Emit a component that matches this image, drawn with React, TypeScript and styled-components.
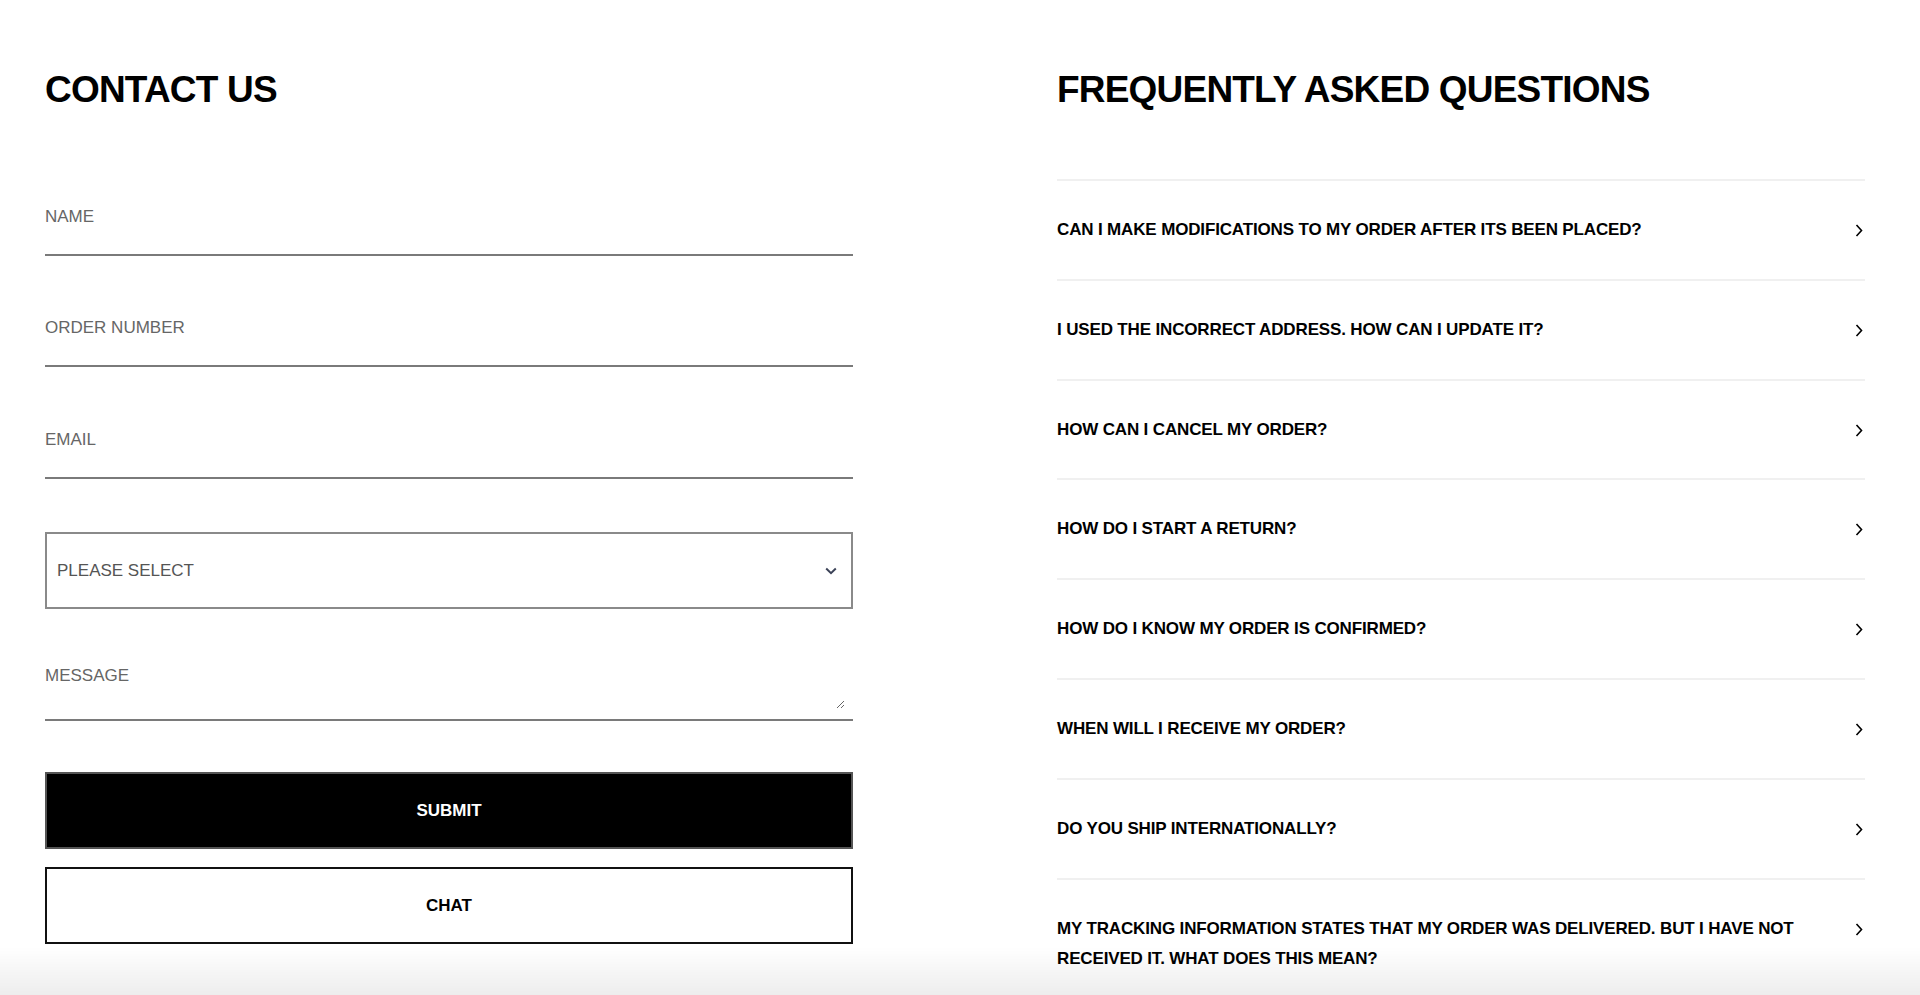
import React from 'react'
import styled, { createGlobalStyle } from 'styled-components'

const GlobalStyle = createGlobalStyle`
  html, body {
    margin: 0;
    padding: 0;
    background: #fff;
  }
  body {
    font-family: 'Liberation Sans', Arial, Helvetica, sans-serif;
    color: #000;
  }
  * {
    box-sizing: border-box;
  }
`

const Page = styled.main`
  display: grid;
  grid-template-columns: 808px 808px;
  column-gap: 204px;
  padding: 68px 0 60px 45px;
`

const Column = styled.section`
  display: flex;
  flex-direction: column;
`

const Heading = styled.h1`
  margin: 0 0 67px;
  font-size: 37px;
  line-height: 44px;
  font-weight: 700;
  letter-spacing: -0.8px;
`

const Form = styled.form`
  display: flex;
  flex-direction: column;
  padding-top: 1px;
`

const LineInput = styled.input<{ $space: number }>`
  display: block;
  width: 100%;
  height: 76px;
  margin: ${(props) => props.$space}px 0 0;
  padding: 0;
  border: none;
  border-bottom: 2px solid #7a7a7a;
  background: transparent;
  font: inherit;
  font-size: 17px;
  color: #000;
  outline: none;

  &::placeholder {
    color: #666;
  }
`

const SelectWrap = styled.div`
  position: relative;
  margin-top: 53px;
`

const Select = styled.select`
  display: block;
  width: 100%;
  height: 77px;
  padding: 0 40px 0 10px;
  border: 2px solid #8a8a8a;
  border-radius: 0;
  background: #fff;
  appearance: none;
  font: inherit;
  font-size: 17px;
  color: #555;
  outline: none;
`

const SelectArrow = styled.svg`
  position: absolute;
  right: 16px;
  top: 50%;
  transform: translateY(-50%);
  pointer-events: none;
`

const MessageField = styled.div`
  height: 76px;
  margin-top: 36px;
  border-bottom: 2px solid #7a7a7a;
`

const MessageArea = styled.textarea`
  display: block;
  width: calc(100% - 8px);
  height: 64px;
  min-height: 40px;
  padding: 21px 0 0;
  border: none;
  background: transparent;
  font: inherit;
  font-size: 17px;
  line-height: 20px;
  color: #000;
  outline: none;
  resize: vertical;

  &::placeholder {
    color: #666;
  }
`

const ActionButton = styled.button<{ $dark?: boolean; $space: number }>`
  display: block;
  width: 100%;
  height: 77px;
  margin-top: ${(props) => props.$space}px;
  border: 2px solid ${(props) => (props.$dark ? '#555' : '#111')};
  background: ${(props) => (props.$dark ? '#000' : '#fff')};
  color: ${(props) => (props.$dark ? '#fff' : '#000')};
  font: inherit;
  font-size: 17px;
  font-weight: 700;
  cursor: pointer;
`

const FaqList = styled.ul`
  list-style: none;
  margin: 0;
  padding: 0;
`

const FaqRow = styled.li`
  display: flex;
  align-items: flex-start;
  justify-content: space-between;
  gap: 40px;
  padding: 34px 2px 33.8px 0;
  border-top: 2px solid #f0f0f0;
  cursor: pointer;
`

const FaqText = styled.span`
  flex: 1;
  font-size: 17px;
  line-height: 30px;
  font-weight: 700;
  letter-spacing: -0.15px;
`

const FaqArrow = styled.svg`
  flex: none;
  margin-top: 9px;
`

const BottomFade = styled.div`
  position: fixed;
  left: 0;
  right: 0;
  bottom: 0;
  height: 48px;
  background: linear-gradient(to bottom, rgba(0, 0, 0, 0), rgba(0, 0, 0, 0.07));
  pointer-events: none;
`

const questions = [
  'CAN I MAKE MODIFICATIONS TO MY ORDER AFTER ITS BEEN PLACED?',
  'I USED THE INCORRECT ADDRESS. HOW CAN I UPDATE IT?',
  'HOW CAN I CANCEL MY ORDER?',
  'HOW DO I START A RETURN?',
  'HOW DO I KNOW MY ORDER IS CONFIRMED?',
  'WHEN WILL I RECEIVE MY ORDER?',
  'DO YOU SHIP INTERNATIONALLY?',
  'MY TRACKING INFORMATION STATES THAT MY ORDER WAS DELIVERED. BUT I HAVE NOT RECEIVED IT. WHAT DOES THIS MEAN?',
]

const App: React.FC = () => {
  return (
    <>
      <GlobalStyle />
      <Page>
        <Column>
          <Heading>CONTACT US</Heading>
          <Form onSubmit={(e) => e.preventDefault()}>
            <LineInput $space={0} placeholder="NAME" />
            <LineInput $space={35} placeholder="ORDER NUMBER" />
            <LineInput $space={36} placeholder="EMAIL" type="email" />
            <SelectWrap>
              <Select defaultValue="">
                <option value="">PLEASE SELECT</option>
                <option value="order">ORDER</option>
                <option value="return">RETURN</option>
                <option value="other">OTHER</option>
              </Select>
              <SelectArrow width="12" height="8" viewBox="0 0 12 8" fill="none">
                <path d="M1.2 1.5l4.8 4.6 4.8-4.6" stroke="#3b4257" strokeWidth="2" />
              </SelectArrow>
            </SelectWrap>
            <MessageField>
              <MessageArea placeholder="MESSAGE" />
            </MessageField>
            <ActionButton $dark $space={51} type="submit">
              SUBMIT
            </ActionButton>
            <ActionButton $space={18} type="button">
              CHAT
            </ActionButton>
          </Form>
        </Column>
        <Column>
          <Heading>FREQUENTLY ASKED QUESTIONS</Heading>
          <FaqList>
            {questions.map((q, index) => (
              <FaqRow key={index}>
                <FaqText>{q}</FaqText>
                <FaqArrow width="8" height="13" viewBox="0 0 8 13" fill="none">
                  <path d="M1.5 1l5 5.5-5 5.5" stroke="#000" strokeWidth="1.6" />
                </FaqArrow>
              </FaqRow>
            ))}
          </FaqList>
        </Column>
      </Page>
      <BottomFade />
    </>
  )
}

export default App
